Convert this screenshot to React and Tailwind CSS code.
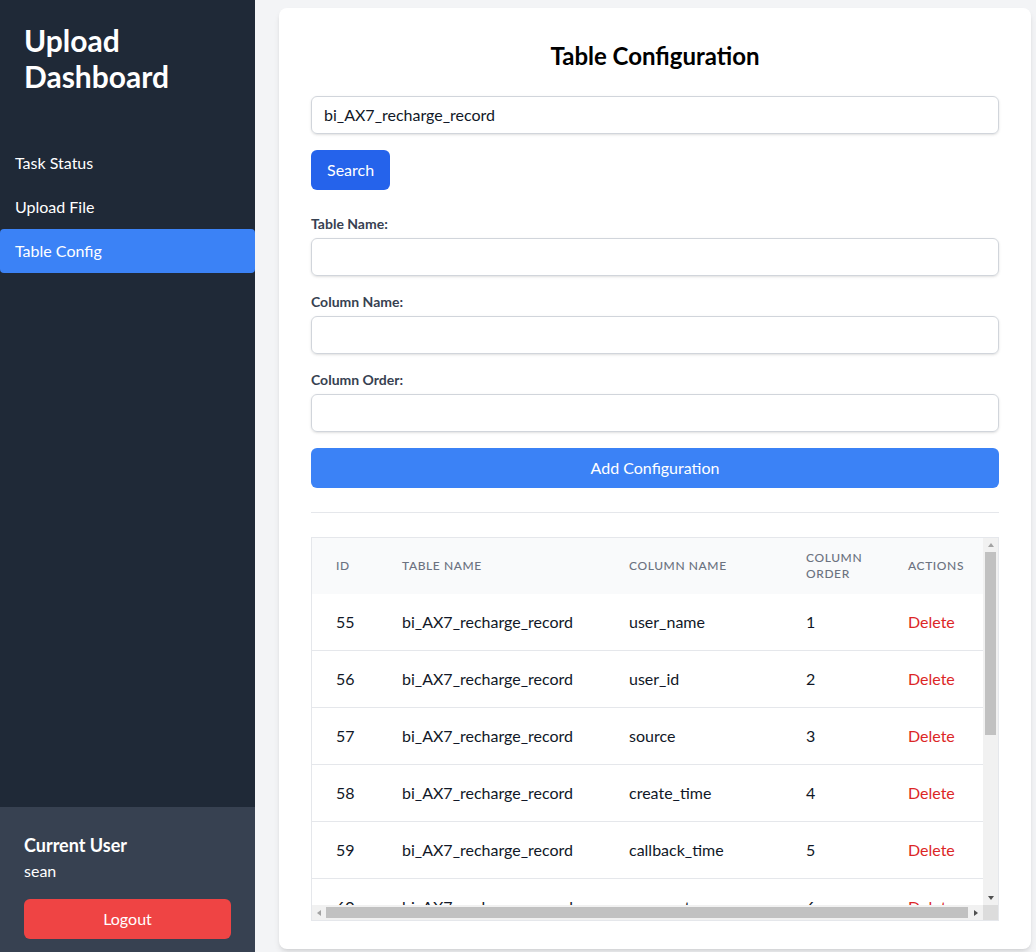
import { useState } from "react"

const rows = [
    { id: 55, table: "bi_AX7_recharge_record", column: "user_name", order: 1 },
    { id: 56, table: "bi_AX7_recharge_record", column: "user_id", order: 2 },
    { id: 57, table: "bi_AX7_recharge_record", column: "source", order: 3 },
    { id: 58, table: "bi_AX7_recharge_record", column: "create_time", order: 4 },
    { id: 59, table: "bi_AX7_recharge_record", column: "callback_time", order: 5 },
    { id: 60, table: "bi_AX7_recharge_record", column: "payment_source", order: 6 },
    { id: 61, table: "bi_AX7_recharge_record", column: "amount", order: 7 },
    { id: 62, table: "bi_AX7_recharge_record", column: "status", order: 8 },
    { id: 63, table: "bi_AX7_recharge_record", column: "order_id", order: 9 },
    { id: 64, table: "bi_AX7_recharge_record", column: "channel", order: 10 },
    { id: 65, table: "bi_AX7_recharge_record", column: "remark", order: 11 },
]

const navItems = ["Task Status", "Upload File", "Table Config"]

const Field = ({ label }) => (
    <div className="mb-4">
        <label className="block text-sm font-bold text-[#374151] mb-1 leading-5">{label}</label>
        <input
            type="text"
            className="w-full border border-[#d1d5db] rounded-md px-3 py-1.5 text-base leading-6 shadow-sm outline-none"
        />
    </div>
)

// small arrow glyphs for the classic scrollbar look
const Arrow = ({ dir, dark }) => {
    const pts = {
        up: "1,6 4,2 7,6",
        down: "1,2 4,6 7,2",
        left: "6,1 2,4 6,7",
        right: "2,1 6,4 2,7",
    }
    return (
        <svg width="8" height="8" viewBox="0 0 8 8">
            <polygon points={pts[dir]} fill={dark ? "#505050" : "#a3a3a3"} />
        </svg>
    )
}

const App = () => {
    const [search, setSearch] = useState("bi_AX7_recharge_record")

    return (
        <div className="flex h-screen overflow-hidden bg-[#f3f4f6] font-['Lato','Noto_Sans',sans-serif]">
            {/* sidebar */}
            <aside className="w-[255px] shrink-0 bg-[#1f2937] text-white flex flex-col">
                <div className="px-6 pt-[22px]">
                    <h1 className="text-3xl font-bold leading-9">Upload Dashboard</h1>
                </div>
                <nav className="pt-[47px]">
                    {navItems.map((item) => (
                        <a
                            key={item}
                            href="#"
                            className={
                                item === "Table Config"
                                    ? "block px-[15px] py-2.5 leading-6 bg-[#3b82f6] rounded"
                                    : "block px-[15px] py-2.5 leading-6"
                            }
                        >
                            {item}
                        </a>
                    ))}
                </nav>
                <div className="mt-auto bg-[#374151] px-6 pt-6 pb-[13px]">
                    <h3 className="text-lg font-bold leading-7">Current User</h3>
                    <p className="leading-6">sean</p>
                    <button className="mt-4 w-full h-10 bg-[#ef4444] rounded-md text-white">Logout</button>
                </div>
            </aside>

            {/* main */}
            <main className="flex-1 min-w-0 pl-6 pr-[5px] pt-2">
                <div className="bg-white rounded-lg shadow-md px-8 pt-8 pb-7">
                    <h2 className="text-2xl font-bold text-center leading-8 text-black mb-6">Table Configuration</h2>

                    <input
                        type="text"
                        value={search}
                        onChange={(e) => setSearch(e.target.value)}
                        className="w-full border border-[#d1d5db] rounded-md px-3 py-1.5 text-base leading-6 text-[#111827] shadow-sm outline-none"
                    />
                    <button className="mt-4 bg-[#2563eb] text-white rounded-md px-4 h-10">Search</button>

                    <div className="mt-6">
                        <Field label="Table Name:" />
                        <Field label="Column Name:" />
                        <Field label="Column Order:" />
                        <button className="w-full h-10 bg-[#3b82f6] text-white rounded-md">Add Configuration</button>
                    </div>

                    <hr className="my-6 border-[#e5e7eb]" />

                    {/* table box with scrollbars */}
                    <div className="border border-[#e5e7eb] h-96 flex flex-col min-w-0">
                        <div className="flex h-[367px] min-w-0">
                            <div className="flex-1 min-w-0 overflow-hidden">
                                <table className="table-fixed w-[678px] border-collapse">
                                    <colgroup>
                                        <col className="w-[66px]" />
                                        <col className="w-[227px]" />
                                        <col className="w-[177px]" />
                                        <col className="w-[102px]" />
                                        <col className="w-[106px]" />
                                    </colgroup>
                                    <thead className="bg-[#f9fafb]">
                                        <tr>
                                            {["ID", "Table Name", "Column Name", "Column Order", "Actions"].map((h) => (
                                                <th
                                                    key={h}
                                                    className="px-6 py-3 text-left text-xs leading-4 font-medium text-[#6b7280] uppercase tracking-wider"
                                                >
                                                    {h}
                                                </th>
                                            ))}
                                        </tr>
                                    </thead>
                                    <tbody>
                                        {rows.map((r) => (
                                            <tr key={r.id} className="border-b border-[#e5e7eb]">
                                                <td className="px-6 py-4 leading-6 text-[#111827]">{r.id}</td>
                                                <td className="px-6 py-4 leading-6 text-[#111827] whitespace-nowrap">{r.table}</td>
                                                <td className="px-6 py-4 leading-6 text-[#111827] whitespace-nowrap">{r.column}</td>
                                                <td className="px-6 py-4 leading-6 text-[#111827]">{r.order}</td>
                                                <td className="px-6 py-4 leading-6">
                                                    <button className="text-[#dc2626]">Delete</button>
                                                </td>
                                            </tr>
                                        ))}
                                    </tbody>
                                </table>
                            </div>
                            <div className="w-[15px] shrink-0 bg-[#f1f1f1] flex flex-col">
                                <div className="h-[14px] flex items-center justify-center">
                                    <Arrow dir="up" />
                                </div>
                                <div className="h-[183px] mx-[2px] bg-[#c1c1c1]" />
                                <div className="flex-1" />
                                <div className="h-[15px] flex items-center justify-center">
                                    <Arrow dir="down" dark />
                                </div>
                            </div>
                        </div>
                        <div className="flex h-[15px] bg-[#f1f1f1]">
                            <div className="w-[14px] flex items-center justify-center">
                                <Arrow dir="left" />
                            </div>
                            <div className="flex-1 my-[2px] bg-[#c1c1c1]" />
                            <div className="w-[15px] flex items-center justify-center">
                                <Arrow dir="right" dark />
                            </div>
                            <div className="w-[15px] bg-[#dcdcdc]" />
                        </div>
                    </div>
                </div>
            </main>
        </div>
    )
}

export default App
